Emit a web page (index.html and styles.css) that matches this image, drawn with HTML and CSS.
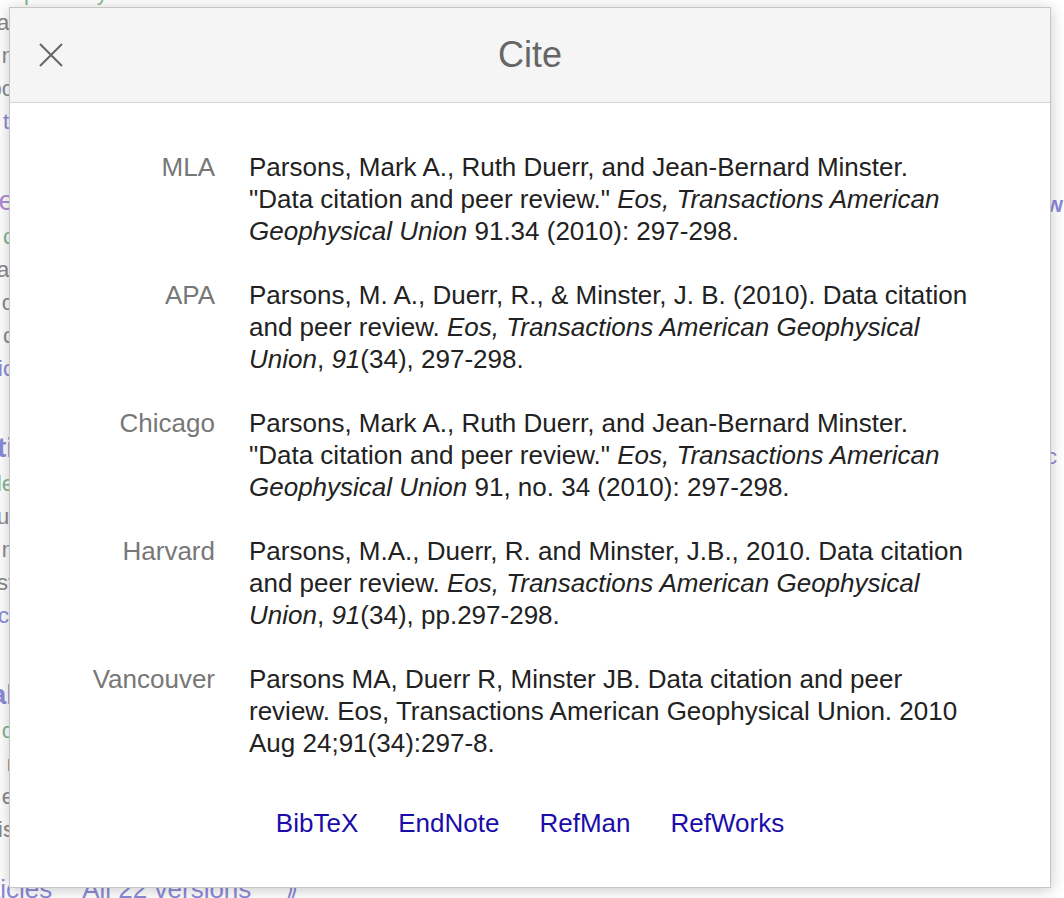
FILE: index.html
```html
<!DOCTYPE html>
<html lang="en">
<head>
<meta charset="utf-8">
<title>Cite</title>
<link rel="stylesheet" href="styles.css">
</head>
<body>
<div class="page">
  <div class="top-line">
    <span>pdf</span><span>by</span>
  </div>
  <div class="edge edge-left">
    <div class="ln gray">al</div>
    <div class="ln gray">n</div>
    <div class="ln gray">bo</div>
    <div class="ln blue">ti</div>
    <div class="gapline"></div>
    <div class="ln title">e</div>
    <div class="ln green">c</div>
    <div class="ln gray">al</div>
    <div class="ln gray">o</div>
    <div class="ln gray">c</div>
    <div class="ln blue">ic</div>
    <div class="gapline"></div>
    <div class="ln title blue-t">ti</div>
    <div class="ln green">le</div>
    <div class="ln gray">ul</div>
    <div class="ln gray">n</div>
    <div class="ln gray">st</div>
    <div class="ln blue">cl</div>
    <div class="gapline"></div>
    <div class="ln title blue-t">al</div>
    <div class="ln green">o</div>
    <div class="ln gray">r</div>
    <div class="ln gray">e</div>
    <div class="ln gray">is</div>
  </div>
  <div class="edge edge-right">
    <div class="rt purple">w</div>
    <div class="rt blue">c</div>
    <div class="rt blue">|</div>
  </div>
  <div class="bottom-links">
    <span>ticles</span><span>All 22 versions</span><span class="quote">⟫</span>
  </div>
</div>

<div class="dialog" role="dialog" aria-labelledby="cite-title">
  <div class="dialog-head">
    <button class="close" aria-label="Close">
      <svg width="24" height="24" viewBox="0 0 24 24"><path d="M1 1 L23 23 M23 1 L1 23" stroke="#666" stroke-width="2" fill="none"/></svg>
    </button>
    <h1 id="cite-title" class="title">Cite</h1>
    <span></span>
  </div>
  <div class="dialog-body">
    <div class="cites">
      <div class="label">MLA</div>
      <div class="cite">Parsons, Mark A., Ruth Duerr, and Jean-Bernard Minster. "Data citation and peer review." <i>Eos, Transactions American Geophysical Union</i> 91.34 (2010): 297-298.</div>

      <div class="label">APA</div>
      <div class="cite">Parsons, M. A., Duerr, R., &amp; Minster, J. B. (2010). Data citation and peer review. <i>Eos, Transactions American Geophysical Union</i>, <i>91</i>(34), 297-298.</div>

      <div class="label">Chicago</div>
      <div class="cite">Parsons, Mark A., Ruth Duerr, and Jean-Bernard Minster. "Data citation and peer review." <i>Eos, Transactions American Geophysical Union</i> 91, no. 34 (2010): 297-298.</div>

      <div class="label">Harvard</div>
      <div class="cite">Parsons, M.A., Duerr, R. and Minster, J.B., 2010. Data citation and peer review. <i>Eos, Transactions American Geophysical Union</i>, <i>91</i>(34), pp.297-298.</div>

      <div class="label">Vancouver</div>
      <div class="cite">Parsons MA, Duerr R, Minster JB. Data citation and peer review. Eos, Transactions American Geophysical Union. 2010 Aug 24;91(34):297-8.</div>
    </div>
    <div class="links">
      <a href="#">BibTeX</a>
      <a href="#">EndNote</a>
      <a href="#">RefMan</a>
      <a href="#">RefWorks</a>
    </div>
  </div>
</div>
</body>
</html>
```

FILE: styles.css
```css
html, body {
  margin: 0;
  padding: 0;
}
body {
  width: 1064px;
  height: 898px;
  overflow: hidden;
  background: #fff;
  font-family: "Liberation Sans", Arial, sans-serif;
  position: relative;
}

/* faded page behind the dialog */
.page {
  width: 1064px;
  height: 898px;
  position: relative;
}
.top-line {
  position: absolute;
  left: 24px;
  top: -22px;
  display: flex;
  gap: 30px;
  font-size: 22px;
  line-height: 30px;
  color: #84b58d;
}
.edge-left {
  position: absolute;
  left: 0;
  top: 6px;
  width: 14px;
  display: flex;
  flex-direction: column;
}
.ln {
  display: flex;
  justify-content: flex-end;
  white-space: nowrap;
  font-size: 22px;
  line-height: 33px;
  height: 33px;
  color: #8a8a8a;
}
.ln.green { color: #84b58d; }
.ln.blue { color: #8b8ad8; }
.ln.title {
  font-size: 28px;
  line-height: 38px;
  height: 38px;
  color: #ae8cd6;
}
.ln.title.blue-t { color: #8b8ad8; font-weight: bold; }
.gapline { height: 44px; }

.edge-right {
  position: absolute;
  left: 1046px;
  top: 190px;
  display: flex;
  flex-direction: column;
  gap: 222px;
}
.rt {
  font-size: 22px;
  line-height: 30px;
  color: #8b8ad8;
}
.rt.purple { color: #8b8ad8; font-weight: bold; }

.bottom-links {
  position: absolute;
  left: -7px;
  top: 872px;
  display: flex;
  gap: 30px;
  font-size: 26px;
  line-height: 34px;
  color: #8b8ad8;
  white-space: nowrap;
}
.bottom-links .quote { font-size: 24px; margin-left: 4px; }

/* dialog */
.dialog {
  position: absolute;
  left: 9px;
  top: 7px;
  width: 1040px;
  height: 879px;
  background: #fff;
  border: 1px solid #c6c6c6;
  box-shadow: 0 2px 14px rgba(0, 0, 0, 0.22);
  display: flex;
  flex-direction: column;
}
.dialog-head {
  height: 94px;
  background: #f5f5f5;
  border-bottom: 1px solid #d6d6d6;
  display: grid;
  grid-template-columns: 1fr auto 1fr;
  align-items: center;
}
.close {
  justify-self: start;
  margin-left: 29px;
  width: 24px;
  height: 24px;
  padding: 0;
  border: 0;
  background: none;
  display: flex;
  cursor: pointer;
}
.title {
  margin: 0;
  font-weight: normal;
  font-size: 36px;
  color: #666;
  line-height: 40px;
}

.dialog-body {
  padding: 48px 0 0 78px;
}
.cites {
  display: grid;
  grid-template-columns: 127px 722px;
  column-gap: 34px;
  font-size: 26px;
  line-height: 32px;
}
.label {
  text-align: right;
  color: #777;
  padding-bottom: 32px;
}
.cite {
  color: #222;
  padding-bottom: 32px;
}
.links {
  margin-top: 16px;
  margin-left: -78px;
  display: flex;
  justify-content: center;
  gap: 40px;
  font-size: 26px;
  line-height: 32px;
}
.links a {
  color: #1a0dab;
  text-decoration: none;
}
```
